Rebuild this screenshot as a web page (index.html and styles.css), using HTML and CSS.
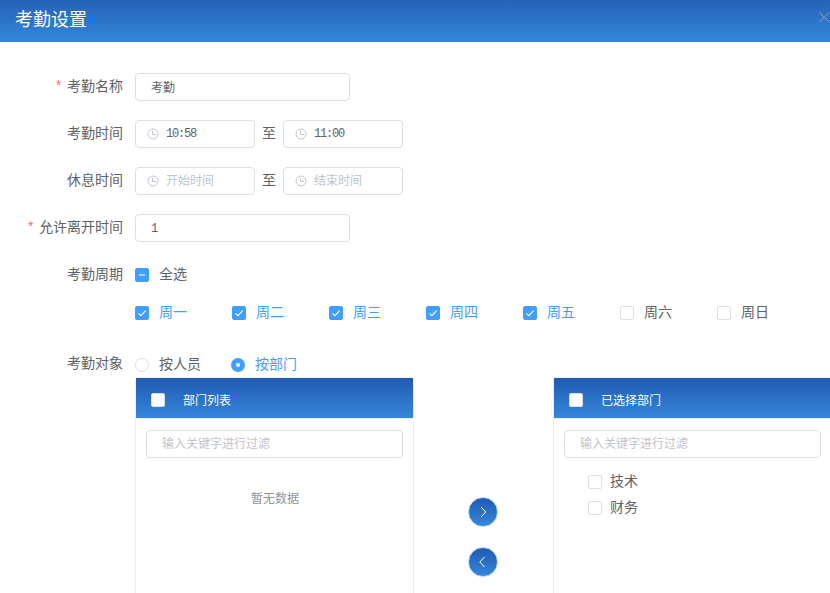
FILE: index.html
```
<!DOCTYPE html>
<html lang="zh-CN">
<head>
    <meta charset="UTF-8">
    <meta name="viewport" content="width=device-width, initial-scale=1.0">
    <title>考勤设置</title>
    <link rel="stylesheet" href="styles.css">
</head>
<body>
    <svg class="defs" width="0" height="0">
        <symbol id="clock" viewBox="0 0 12 12">
            <circle cx="6" cy="6" r="5" fill="none" stroke="currentColor"/>
            <path d="M5.5 3v3.5H9" fill="none" stroke="currentColor"/>
        </symbol>
        <symbol id="check" viewBox="0 0 14 14">
            <path d="M3.5 7.3l2.4 2.4 4.8-5" fill="none" stroke="#fff" stroke-width="1.1"/>
        </symbol>
    </svg>
    <div class="dialog">
        <div class="dialog-header">
            <span class="dialog-title">考勤设置</span>
            <svg class="dialog-close" width="11" height="11" viewBox="0 0 11 11"><path d="M.5.5l9.5 9.5M10 .5L.5 10" fill="none" stroke="#a09a99"/></svg>
        </div>
        <div class="form">
            <div class="form-item">
                <label class="label required">考勤名称</label>
                <input class="input" type="text" value="考勤">
            </div>
            <div class="form-item">
                <label class="label">考勤时间</label>
                <div class="time"><svg class="clock"><use href="#clock"/></svg><input class="number" type="text" value="10:58"></div>
                <span class="to">至</span>
                <div class="time"><svg class="clock"><use href="#clock"/></svg><input class="number" type="text" value="11:00"></div>
            </div>
            <div class="form-item">
                <label class="label">休息时间</label>
                <div class="time"><svg class="clock"><use href="#clock"/></svg><input type="text" placeholder="开始时间"></div>
                <span class="to">至</span>
                <div class="time"><svg class="clock"><use href="#clock"/></svg><input type="text" placeholder="结束时间"></div>
            </div>
            <div class="form-item">
                <label class="label required">允许离开时间</label>
                <input class="input number" type="text" value="1">
            </div>
            <div class="form-item cycle">
                <label class="label">考勤周期</label>
                <div>
                    <div class="option all"><span class="box on"><i class="dash"></i></span>全选</div>
                    <div class="days">
                        <div class="option active"><span class="box on"><svg><use href="#check"/></svg></span>周一</div>
                        <div class="option active"><span class="box on"><svg><use href="#check"/></svg></span>周二</div>
                        <div class="option active"><span class="box on"><svg><use href="#check"/></svg></span>周三</div>
                        <div class="option active"><span class="box on"><svg><use href="#check"/></svg></span>周四</div>
                        <div class="option active"><span class="box on"><svg><use href="#check"/></svg></span>周五</div>
                        <div class="option"><span class="box"></span>周六</div>
                        <div class="option"><span class="box"></span>周日</div>
                    </div>
                </div>
            </div>
            <div class="form-item target">
                <label class="label">考勤对象</label>
                <div>
                    <div class="radios">
                        <div class="option"><span class="radio"></span>按人员</div>
                        <div class="option active"><span class="radio on"></span>按部门</div>
                    </div>
                    <div class="transfer">
                        <div class="panel">
                            <div class="panel-header"><span class="box"></span>部门列表</div>
                            <div class="panel-body">
                                <input class="input filter" type="text" placeholder="输入关键字进行过滤">
                                <p class="empty">暂无数据</p>
                            </div>
                        </div>
                        <div class="buttons">
                            <button class="move"><svg width="12" height="12" viewBox="0 0 12 12"><path d="M4 1l4.7 5L4 11" fill="none" stroke="#fff"/></svg></button>
                            <button class="move"><svg width="12" height="12" viewBox="0 0 12 12"><path d="M7.5 1L2.8 6l4.7 5" fill="none" stroke="#fff"/></svg></button>
                        </div>
                        <div class="panel">
                            <div class="panel-header"><span class="box"></span>已选择部门</div>
                            <div class="panel-body">
                                <input class="input filter" type="text" placeholder="输入关键字进行过滤">
                                <div class="tree">
                                    <div class="tree-node"><span class="box"></span>技术</div>
                                    <div class="tree-node"><span class="box"></span>财务</div>
                                </div>
                            </div>
                        </div>
                    </div>
                </div>
            </div>
        </div>
    </div>
</body>
</html>
```
FILE: styles.css
```
* {
    box-sizing: border-box;
}

body {
    margin: 0;
    font-family: "Liberation Sans", "Noto Sans CJK SC", sans-serif;
    font-size: 14px;
    color: #606266;
    background-color: #fff;
}

.defs {
    position: absolute;
}

.dialog {
    height: 593px;
    overflow: hidden;
}

.dialog-header {
    display: flex;
    justify-content: space-between;
    height: 42px;
    padding-left: 15px;
    background: linear-gradient(#2462b7, #3587dc);
}

.dialog-title {
    line-height: 40px;
    font-size: 18px;
    color: #fff;
}

.dialog-close {
    margin-top: 12px;
}

.form {
    width: 840px;
    padding-top: 31px;
}

.form-item {
    display: flex;
    height: 28px;
    margin-bottom: 19px;
}

.label {
    width: 135px;
    padding-right: 12px;
    line-height: 27px;
    text-align: right;
    flex-shrink: 0;
}

.required::before {
    content: "*";
    margin-right: 4px;
    font-family: "Liberation Mono", monospace;
    color: #f56c6c;
}

input {
    font-family: inherit;
    font-size: 12px;
    color: #606266;
    outline: none;
}

input::placeholder {
    color: #c0c4cc;
}

.input {
    width: 215px;
    height: 28px;
    padding: 0 15px 1px;
    border: 1px solid #dcdfe6;
    border-radius: 4px;
}

.number {
    font-family: "Liberation Mono", monospace;
    letter-spacing: -1.2px;
}

.input.number {
    padding-top: 1px;
    padding-bottom: 0;
}

.time {
    display: flex;
    align-items: center;
    width: 120px;
    height: 28px;
    padding-left: 11px;
    border: 1px solid #dcdfe6;
    border-radius: 4px;
}

.time input {
    width: 80px;
    padding: 0;
    margin-left: 7px;
    border: none;
}

.clock {
    width: 12px;
    height: 12px;
    color: #c0c4cc;
}

.to {
    width: 28px;
    line-height: 27px;
    text-align: center;
}

.option {
    display: flex;
    align-items: flex-start;
    gap: 10px;
    height: 28px;
    line-height: 26px;
}

.option .box {
    margin-top: 7px;
}

.active {
    color: #409eff;
}

.box {
    display: flex;
    align-items: center;
    justify-content: center;
    width: 14px;
    height: 14px;
    border: 1px solid #dcdfe6;
    border-radius: 2px;
    background-color: #fff;
    flex-shrink: 0;
}

.box.on {
    border-color: #409eff;
    background-color: #409eff;
}

.box svg {
    width: 14px;
    height: 14px;
    flex-shrink: 0;
}

.dash {
    width: 6px;
    height: 2px;
    background-color: #a9d3ff;
}

.cycle {
    height: 66px;
    margin-bottom: 23px;
}

.all {
    margin-bottom: 10px;
}

.days {
    display: flex;
    gap: 45px;
}

.target {
    height: auto;
    margin: 0;
}

.radios {
    display: flex;
    gap: 30px;
    height: 27px;
}

.radios .option {
    line-height: 28px;
}

.radio {
    width: 14px;
    height: 14px;
    margin-top: 8px;
    border: 1px solid #dcdfe6;
    border-radius: 50%;
}

.radio.on {
    border: 5px solid #409eff;
}

.transfer {
    display: flex;
}

.panel {
    width: 279px;
    height: 300px;
    border: 1px solid #ebeef5;
    border-radius: 4px 4px 0 0;
}

.panel-header {
    display: flex;
    align-items: center;
    gap: 18px;
    height: 41px;
    padding: 3px 15px 0;
    border-bottom: 1px solid #ebeef5;
    font-size: 12px;
    color: #fff;
    background: linear-gradient(#205ab0, #3587dc);
}

.panel-body {
    padding: 11px 10px;
}

.filter {
    width: 257px;
    padding-bottom: 0;
}

.empty {
    margin: 31px 0 0 1px;
    font-size: 12px;
    line-height: 20px;
    text-align: center;
    color: #909399;
}

.tree {
    padding: 10px 0 0 24px;
}

.tree-node {
    display: flex;
    gap: 8px;
    height: 26px;
    line-height: 26px;
}

.tree-node .box {
    margin-top: 7px;
}

.buttons {
    display: flex;
    flex-direction: column;
    align-items: center;
    gap: 20px;
    width: 139px;
    padding: 120px 1px 0 0;
}

.move {
    display: flex;
    align-items: center;
    justify-content: center;
    width: 30px;
    height: 30px;
    padding: 0;
    border: 1px solid #b3d8ff;
    border-radius: 50%;
    background: linear-gradient(#205ab0, #3587dc);
}
```
